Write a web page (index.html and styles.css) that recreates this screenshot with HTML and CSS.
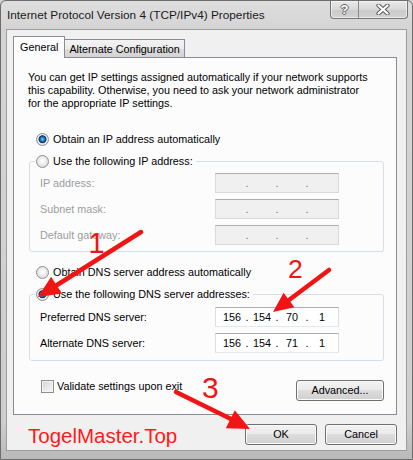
FILE: index.html
```html
<!DOCTYPE html>
<html lang="en">
<head>
<meta charset="utf-8">
<title>Internet Protocol Version 4 (TCP/IPv4) Properties</title>
<link rel="stylesheet" href="styles.css">
</head>
<body>
<div class="window">
  <div class="titlebar">
    <span class="title">Internet Protocol Version 4 (TCP/IPv4) Properties</span>
    <div class="caption-btns">
      <span class="cap-btn help">?</span>
      <span class="cap-btn close">
        <svg width="14" height="11" viewBox="0 0 14 11">
          <path d="M2.5 1.5 L11.5 9.5 M11.5 1.5 L2.5 9.5" stroke="#5e5e5e" stroke-width="4.2" stroke-linecap="round"/>
          <path d="M2.5 1.5 L11.5 9.5 M11.5 1.5 L2.5 9.5" stroke="#ffffff" stroke-width="2.2" stroke-linecap="round"/>
        </svg>
      </span>
    </div>
  </div>

  <div class="client">
    <div class="tabs">
      <div class="tab active">General</div>
      <div class="tab">Alternate Configuration</div>
    </div>

    <div class="panel">
      <p class="intro">You can get IP settings assigned automatically if your network supports<br>this capability. Otherwise, you need to ask your network administrator<br>for the appropriate IP settings.</p>

      <div class="opt first"><span class="radio checked"></span><span>Obtain an IP address automatically</span></div>

      <fieldset class="group">
        <legend><span class="radio"></span><span>Use the following IP address:</span></legend>
        <div class="fields off">
          <span class="lbl">IP address:</span>
          <div class="ipbox"><span></span><i>.</i><span></span><i>.</i><span></span><i>.</i><span></span></div>
          <span class="lbl">Subnet mask:</span>
          <div class="ipbox"><span></span><i>.</i><span></span><i>.</i><span></span><i>.</i><span></span></div>
          <span class="lbl">Default gateway:</span>
          <div class="ipbox"><span></span><i>.</i><span></span><i>.</i><span></span><i>.</i><span></span></div>
        </div>
      </fieldset>

      <div class="opt dns"><span class="radio"></span><span>Obtain DNS server address automatically</span></div>

      <fieldset class="group dnsgroup">
        <legend><span class="radio checked"></span><span>Use the following DNS server addresses:</span></legend>
        <div class="fields">
          <span class="lbl">Preferred DNS server:</span>
          <div class="ipbox"><span>156</span><i>.</i><span>154</span><i>.</i><span>70</span><i>.</i><span>1</span></div>
          <span class="lbl">Alternate DNS server:</span>
          <div class="ipbox"><span>156</span><i>.</i><span>154</span><i>.</i><span>71</span><i>.</i><span>1</span></div>
        </div>
      </fieldset>

      <div class="bottomrow">
        <div class="check"><span class="checkbox"></span><span>Validate settings upon exit</span></div>
        <div class="btn adv">Advanced...</div>
      </div>
    </div>

    <div class="footer">
      <span class="mark">TogelMaster.Top</span>
      <div class="btn ok">OK</div>
      <div class="btn cancel">Cancel</div>
    </div>
  </div>

  <svg class="annot" width="413" height="460" viewBox="0 0 413 460">
    <g fill="#f21414" stroke="none">
      <text x="88.5" y="252.5" font-size="29" font-family="Liberation Sans, Arial, sans-serif">1</text>
      <text x="288" y="277.5" font-size="26.5" font-family="Liberation Sans, Arial, sans-serif">2</text>
      <text x="202" y="397.5" font-size="30" font-family="Liberation Sans, Arial, sans-serif">3</text>
      <polygon points="38,297 61.9,293.6 51.1,276.8"/>
      <polygon points="273,312 294.4,307.2 283.6,292.8"/>
      <polygon points="250,429 225.8,428.2 234.8,410.3"/>
    </g>
    <g stroke="#f21414" stroke-width="4.5" stroke-linecap="round" fill="none">
      <line x1="141" y1="232" x2="57" y2="285"/>
      <line x1="329" y1="270" x2="289" y2="300"/>
      <line x1="176" y1="392" x2="231" y2="419"/>
    </g>
  </svg>
</div>
</body>
</html>
```

FILE: styles.css
```css
* { box-sizing: border-box; }

html, body {
  margin: 0;
  padding: 0;
}

body {
  width: 413px;
  height: 460px;
  overflow: hidden;
  background: #cfcfcf;
  font-family: "Liberation Sans", Arial, sans-serif;
  font-size: 10.8px;
  color: #000;
}

.window {
  position: relative;
  width: 413px;
  height: 460px;
  border: 1px solid #6c6c6c;
  border-radius: 6px 6px 0 0;
  background: linear-gradient(to bottom, #dedede 0, #d4d4d4 28px, #cecece 420px, #b9b9b9 100%);
  display: flex;
  flex-direction: column;
  padding: 0 5px 8px 5px;
}

/* ---------- title bar ---------- */
.titlebar {
  height: 28px;
  display: flex;
  align-items: center;
  padding-left: 1px;
}

.title {
  font-size: 11.8px;
  color: #1a1a1a;
}

.caption-btns {
  margin-left: auto;
  margin-right: -1px;
  align-self: flex-start;
  display: flex;
  height: 18px;
  border: 1px solid #767676;
  border-top: none;
  border-radius: 0 0 4px 4px;
  background: linear-gradient(to bottom, #e8e8e8 0, #d9d9d9 50%, #cbcbcb 51%, #d2d2d2 100%);
  box-shadow: inset 0 0 0 1px rgba(255, 255, 255, 0.55);
  overflow: hidden;
}

.cap-btn {
  display: flex;
  align-items: center;
  justify-content: center;
  height: 100%;
}

.cap-btn.help {
  width: 27px;
  font-weight: bold;
  font-size: 13px;
  color: #fff;
  text-shadow: 1px 0 #606060, -1px 0 #606060, 0 1px #606060, 0 -1px #606060;
}

.cap-btn.close {
  width: 49px;
  border-left: 1px solid #8a8a8a;
}

/* ---------- client area ---------- */
.client {
  flex: 1;
  border: 1px solid #9c9c9c;
  background: #f0f0f0;
  padding: 6px 9px 0 6px;
  display: flex;
  flex-direction: column;
}

.tabs {
  display: flex;
  align-items: flex-end;
  height: 21px;
}

.tab {
  height: 18px;
  padding: 1px 4px 0 4px;
  line-height: 16px;
  border: 1px solid #898c95;
  border-left: none;
  border-bottom: none;
  background: linear-gradient(to bottom, #f3f3f3 0, #ebebeb 50%, #dddddd 51%, #d3d3d3 100%);
  white-space: nowrap;
}

.tab.active {
  position: relative;
  z-index: 1;
  height: 22px;
  margin-bottom: -1px;
  padding: 0 6px;
  line-height: 20px;
  border-left: 1px solid #898c95;
  background: #fcfcfc;
}

.panel {
  height: 358px;
  border: 1px solid #898c95;
  background: #fcfcfc;
  padding: 13px 12px 0 14px;
}

.intro {
  margin: 0;
  line-height: 13px;
  white-space: nowrap;
}

.opt {
  display: flex;
  align-items: center;
  gap: 4px;
  height: 14px;
  line-height: 14px;
  margin-left: 8px;
}

.opt.first { margin-top: 22px; }
.opt.dns { margin-top: 13px; }

.radio {
  flex: none;
  width: 13px;
  height: 13px;
  border-radius: 50%;
  border: 1px solid #8d8f91;
  background: radial-gradient(circle at 50% 45%, #ffffff 0, #f1f1f1 3px, #dcdcdc 6px);
}

.radio.checked {
  background: radial-gradient(circle at 50% 48%, #8fd8ff 0, #2c8fd4 1.5px, #0f4f8c 3px, #0b2f5c 3.6px, #f2f2f2 4.4px, #dcdcdc 6px);
}

/* ---------- group boxes ---------- */
.group {
  margin: 8px 0 0 1px;
  padding: 5px 0 6px 10px;
  border: 1px solid #d5dfe5;
  border-radius: 3px;
  min-width: 0;
}

.group.dnsgroup {
  padding-top: 6px;
  padding-bottom: 7px;
}

.group legend {
  display: flex;
  align-items: center;
  gap: 4px;
  height: 14px;
  line-height: 14px;
  padding: 0 3px 0 1px;
  margin-left: -5px;
}

.fields {
  display: grid;
  grid-template-columns: 175px 124px;
  row-gap: 6px;
  align-items: center;
}

.lbl {
  line-height: 20px;
}

.fields.off .lbl {
  color: #9c9c9c;
}

.ipbox {
  height: 20px;
  display: grid;
  grid-template-columns: 26px 4px 26px 4px 26px 4px 26px;
  padding-left: 3px;
  border: 1px solid #dbdfe6;
  border-top-color: #abadb3;
  border-bottom-color: #e3e9ef;
  background: #fff;
  line-height: 18px;
  text-align: center;
}

.ipbox i {
  font-style: normal;
}

.fields.off .ipbox {
  background: #f0f0f0;
  border-color: #dadada;
  border-top-color: #adadad;
}

.fields.off .ipbox i {
  color: #6e6e9c;
}

/* ---------- bottom of panel ---------- */
.bottomrow {
  display: flex;
  align-items: flex-start;
  margin-top: 19px;
}

.check {
  display: flex;
  align-items: center;
  gap: 3px;
  margin-left: 13px;
  line-height: 13px;
}

.checkbox {
  flex: none;
  width: 13px;
  height: 13px;
  border: 1px solid #8e8f8f;
  background: linear-gradient(135deg, #cfd1d4 0, #e6e7e8 50%, #f6f6f6 100%);
  box-shadow: inset 0 0 0 1px #f4f4f4;
}

.btn {
  height: 21px;
  line-height: 19px;
  text-align: center;
  border: 1px solid #707070;
  border-radius: 3px;
  background: linear-gradient(to bottom, #f2f2f2 0, #ebebeb 45%, #dddddd 50%, #cfcfcf 100%);
  box-shadow: inset 0 0 0 1px #fbfbfb;
}

.btn.adv {
  margin-left: auto;
  width: 88px;
}

/* ---------- footer ---------- */
.footer {
  display: flex;
  align-items: flex-start;
  gap: 8px;
  margin-top: 9px;
}

.mark {
  margin-left: 15px;
  font-size: 20.5px;
  line-height: 24px;
  color: #ff1a1a;
}

.btn.ok {
  margin-left: auto;
  width: 72px;
}

.btn.cancel {
  width: 72px;
}

/* ---------- annotations ---------- */
.annot {
  position: absolute;
  left: -1px;
  top: -1px;
  pointer-events: none;
}
```
